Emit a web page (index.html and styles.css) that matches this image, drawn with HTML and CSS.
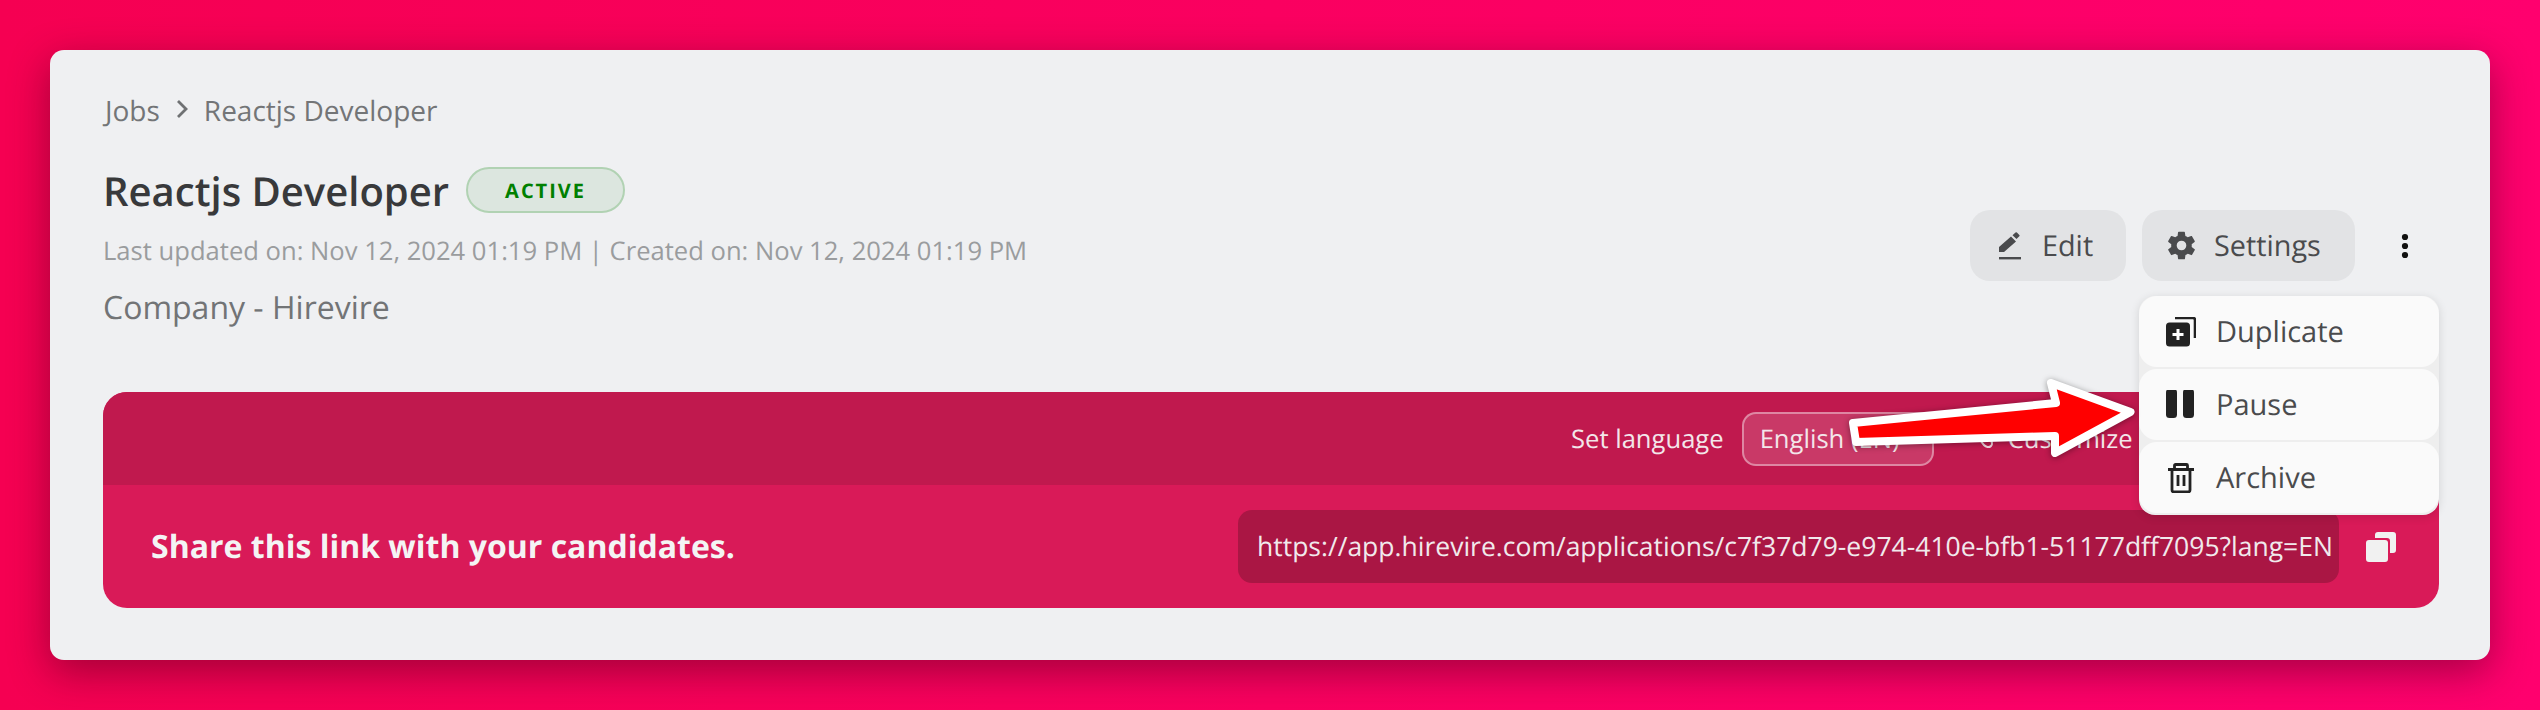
FILE: index.html
```html
<!DOCTYPE html>
<html lang="en">
<head>
<meta charset="utf-8">
<title>Reactjs Developer</title>
<link rel="stylesheet" href="styles.css">
</head>
<body>
<main class="card">
  <nav class="crumbs">
    <span>Jobs</span>
    <svg class="crumb-sep" viewBox="0 0 12 20"><path d="M2 2l8 8-8 8" fill="none" stroke="#6f7173" stroke-width="2.800"/></svg>
    <span>Reactjs Developer</span>
  </nav>
  <header class="head">
    <div class="head-left">
      <div class="title-row">
        <h1 class="title">Reactjs Developer</h1>
        <span class="badge">ACTIVE</span>
      </div>
      <p class="dates">Last updated on: Nov 12, 2024 01:19 PM | Created on: Nov 12, 2024 01:19 PM</p>
      <p class="company">Company - Hirevire</p>
    </div>
    <div class="actions">
      <button class="btn btn-edit">
        <svg class="edit-icon" viewBox="0 0 24 28"><path d="M1 25h22v2.400H1z" fill="#4a4b4d"/><path d="M1 20v-5L13 4.500l5 5L6 20zM14.500 3.200l3-2.700a1 1 0 0 1 1.400 0l2.400 2.400a1 1 0 0 1 0 1.400l-2.800 2.800z" fill="#4a4b4d"/></svg>
        Edit
      </button>
      <button class="btn btn-settings">
        <svg class="gear-icon" viewBox="0 0 24 24"><path fill="#4a4b4d" d="M19.400 13c.04-.33.06-.66.06-1s-.02-.67-.06-1l2.100-1.600c.2-.15.25-.42.12-.64l-2-3.460c-.12-.22-.38-.3-.6-.22l-2.500 1c-.52-.4-1.080-.73-1.700-.98l-.38-2.650A.49.49 0 0 0 14 2h-4c-.25 0-.46.18-.5.42l-.37 2.650c-.62.25-1.180.59-1.700.98l-2.500-1a.5.5 0 0 0-.6.22l-2 3.460c-.13.22-.07.49.12.64L4.570 11c-.04.33-.07.66-.07 1s.03.67.07 1l-2.110 1.650a.5.5 0 0 0-.12.64l2 3.460c.12.22.38.3.6.22l2.500-1c.52.4 1.080.73 1.700.98l.37 2.650c.04.24.25.42.5.42h4c.25 0 .46-.18.5-.42l.37-2.650c.62-.25 1.180-.59 1.700-.98l2.500 1c.22.08.48 0 .6-.22l2-3.460a.5.5 0 0 0-.12-.64zM12 15.500a3.500 3.500 0 1 1 0-7 3.500 3.500 0 0 1 0 7z"/></svg>
        Settings
      </button>
      <svg class="more" viewBox="0 0 8 28"><circle cx="4" cy="5" r="3.100"/><circle cx="4" cy="14" r="3.100"/><circle cx="4" cy="23" r="3.100"/></svg>
    </div>
  </header>
  <section class="share">
    <div class="share-top">
      <span class="lang-label">Set language</span>
      <span class="lang-select">English (EN)</span>
      <span class="customize">
        <svg class="brush" viewBox="0 0 24 24"><path d="M5 3c5 1 12 8 13 13 .4 2.500-2 4.500-4.500 4-5-1-11-12-8.500-17z" fill="none" stroke="#f0d5de" stroke-width="2"/></svg>
        Customize
      </span>
    </div>
    <div class="share-bottom">
      <strong class="share-text">Share this link with your candidates.</strong>
      <span class="url">https://app.hirevire.com/applications/c7f37d79-e974-410e-bfb1-51177dff7095?lang=EN</span>
      <svg class="copy" viewBox="0 0 30 30"><path d="M9 3a3 3 0 0 1 3-3h15a3 3 0 0 1 3 3v15a3 3 0 0 1-3 3h-3V9a3 3 0 0 0-3-3H9z" fill="#f1f1f1"/><rect x="0" y="8" width="22" height="22" rx="3" fill="#f1f1f1"/></svg>
    </div>
  </section>
  <ul class="menu">
    <li class="menu-item">
      <svg class="menu-icon" viewBox="0 0 30 30"><path d="M9 1h18a2 2 0 0 1 2 2v18" fill="none" stroke="#222" stroke-width="2.600"/><rect x="0" y="5.500" width="24" height="24" rx="3.500" fill="#222"/><path d="M10.500 12h3v4h4v3h-4v4h-3v-4h-4v-3h4z" fill="#fff"/></svg>
      Duplicate
    </li>
    <li class="menu-item">
      <svg class="menu-icon" viewBox="0 2 30 30"><rect x="0" y="1" width="11" height="29" rx="3.500" fill="#222"/><rect x="17" y="1" width="11" height="29" rx="3.500" fill="#222"/></svg>
      Pause
    </li>
    <li class="menu-item">
      <svg class="menu-icon" viewBox="0 0 30 30"><path d="M2 6.500h26M8.500 6.500V2.500a1 1 0 0 1 1-1h11a1 1 0 0 1 1 1v4M6 6.500V27a2 2 0 0 0 2 2h14a2 2 0 0 0 2-2V6.500M12 12v11M18 12v11" fill="none" stroke="#222" stroke-width="2.800"/></svg>
      Archive
    </li>
  </ul>
</main>
<svg class="arrow" viewBox="0 0 310 90"><path d="M13 51L216 31 211 11 290.500 40 215 81 215 64 16 70z" fill="#f00" stroke="#fff" stroke-width="8" stroke-linejoin="round"/></svg>
</body>
</html>
```
FILE: styles.css
```css
* { box-sizing: border-box; }
html, body { height: 100%; }
body {
  margin: 0;
  height: 710px;
  padding: 50px;
  overflow: hidden;
  position: relative;
  background: linear-gradient(90deg, #f50052, #ff006e);
  font-family: "Open Sans", sans-serif;
  text-rendering: geometricPrecision;
}
.card {
  position: relative;
  width: 2440px;
  height: 610px;
  padding: 42px 51px 52px 53px;
  background: #eff0f2;
  border-radius: 14px;
  box-shadow: 0 12px 40px rgba(60, 0, 20, .45);
}
.crumbs {
  display: flex;
  align-items: center;
  gap: 16px;
  height: 38px;
  margin-left: 2px;
  font-size: 28px;
  color: #737577;
}
.crumb-sep { width: 12px; height: 20px; margin-top: -4px; }
.head {
  display: flex;
  justify-content: space-between;
  align-items: flex-start;
  margin-top: 30px;
  height: 232px;
}
.title-row { display: flex; align-items: center; gap: 17px; height: 60px; }
.title {
  margin: 0;
  font-size: 40px;
  font-weight: 600;
  color: #38393b;
}
.badge {
  width: 159px;
  height: 46px;
  display: flex;
  align-items: center;
  justify-content: center;
  background: #dce6df;
  border: 2px solid #b1d2b3;
  border-radius: 23px;
  color: #008000;
  font-size: 20px;
  font-weight: 700;
  letter-spacing: 2px;
}
.dates {
  margin: 13px 0 0;
  font-size: 25.600px;
  line-height: 36px;
  color: #9a9c9e;
}
.company {
  margin: 17px 0 0;
  font-size: 32px;
  line-height: 44px;
  color: #727476;
}
.actions {
  display: flex;
  align-items: center;
  gap: 16px;
  margin-top: 50px;
}
.btn {
  display: flex;
  align-items: center;
  height: 71px;
  border: 0;
  border-radius: 20px;
  background: #e2e3e5;
  font: 500 28.800px "Open Sans", sans-serif;
  text-rendering: geometricPrecision;
  color: #4a4b4d;
}
.btn-edit { width: 156px; padding: 0 0 0 28px; gap: 20px; }
.btn-settings { width: 213px; padding: 0 0 0 23px; gap: 16px; }
.edit-icon { width: 24px; height: 28px; }
.gear-icon { width: 33px; height: 33px; }
.more { width: 8px; height: 28px; margin: 0 30px; fill: #111; }
.share {
  height: 216px;
  border-radius: 24px;
  overflow: hidden;
  background: #d91a58;
}
.share-top {
  height: 93px;
  background: #c0194e;
  display: flex;
  align-items: center;
  padding-left: 1468px;
  color: #f3e6ea;
  font-size: 25.600px;
}
.lang-select {
  width: 192px;
  height: 54px;
  margin-left: 18px;
  padding-left: 16px;
  line-height: 50px;
  border: 2px solid rgba(255, 255, 255, .4);
  border-radius: 14px;
  background: rgba(255, 255, 255, .14);
}
.customize { display: flex; align-items: center; gap: 10px; margin-left: 40px; }
.brush { width: 24px; height: 24px; }
.share-bottom {
  display: flex;
  align-items: center;
  height: 123px;
  padding: 0 43px 0 48px;
}
.share-text { font-size: 32px; font-weight: 700; color: #f4f4f4; }
.url {
  width: 1101px;
  height: 73px;
  margin-left: auto;
  padding-left: 19px;
  line-height: 72px;
  border-radius: 14px;
  background: #aa1644;
  color: #f1e9ec;
  font-size: 26.500px;
  white-space: nowrap;
}
.copy { width: 30px; height: 30px; margin-left: 27px; }
.menu {
  position: absolute;
  left: 2089px;
  top: 246px;
  width: 300px;
  height: 219px;
  margin: 0;
  padding: 0;
  list-style: none;
  display: flex;
  flex-direction: column;
  gap: 2px;
  border-radius: 16px;
  background: #eeeeee;
  box-shadow: 0 2px 10px rgba(0, 0, 0, .12);
}
.menu-item {
  display: flex;
  align-items: center;
  gap: 20px;
  height: 71px;
  padding-left: 27px;
  border-radius: 18px;
  background: #fafafa;
  font-size: 29px;
  color: #4a4b4d;
}
.menu-icon { width: 30px; height: 30px; flex: none; }
.arrow {
  position: absolute;
  left: 1840px;
  top: 372px;
  width: 310px;
  height: 90px;
  filter: drop-shadow(0 1px 3px rgba(0, 0, 0, .4));
}
```
